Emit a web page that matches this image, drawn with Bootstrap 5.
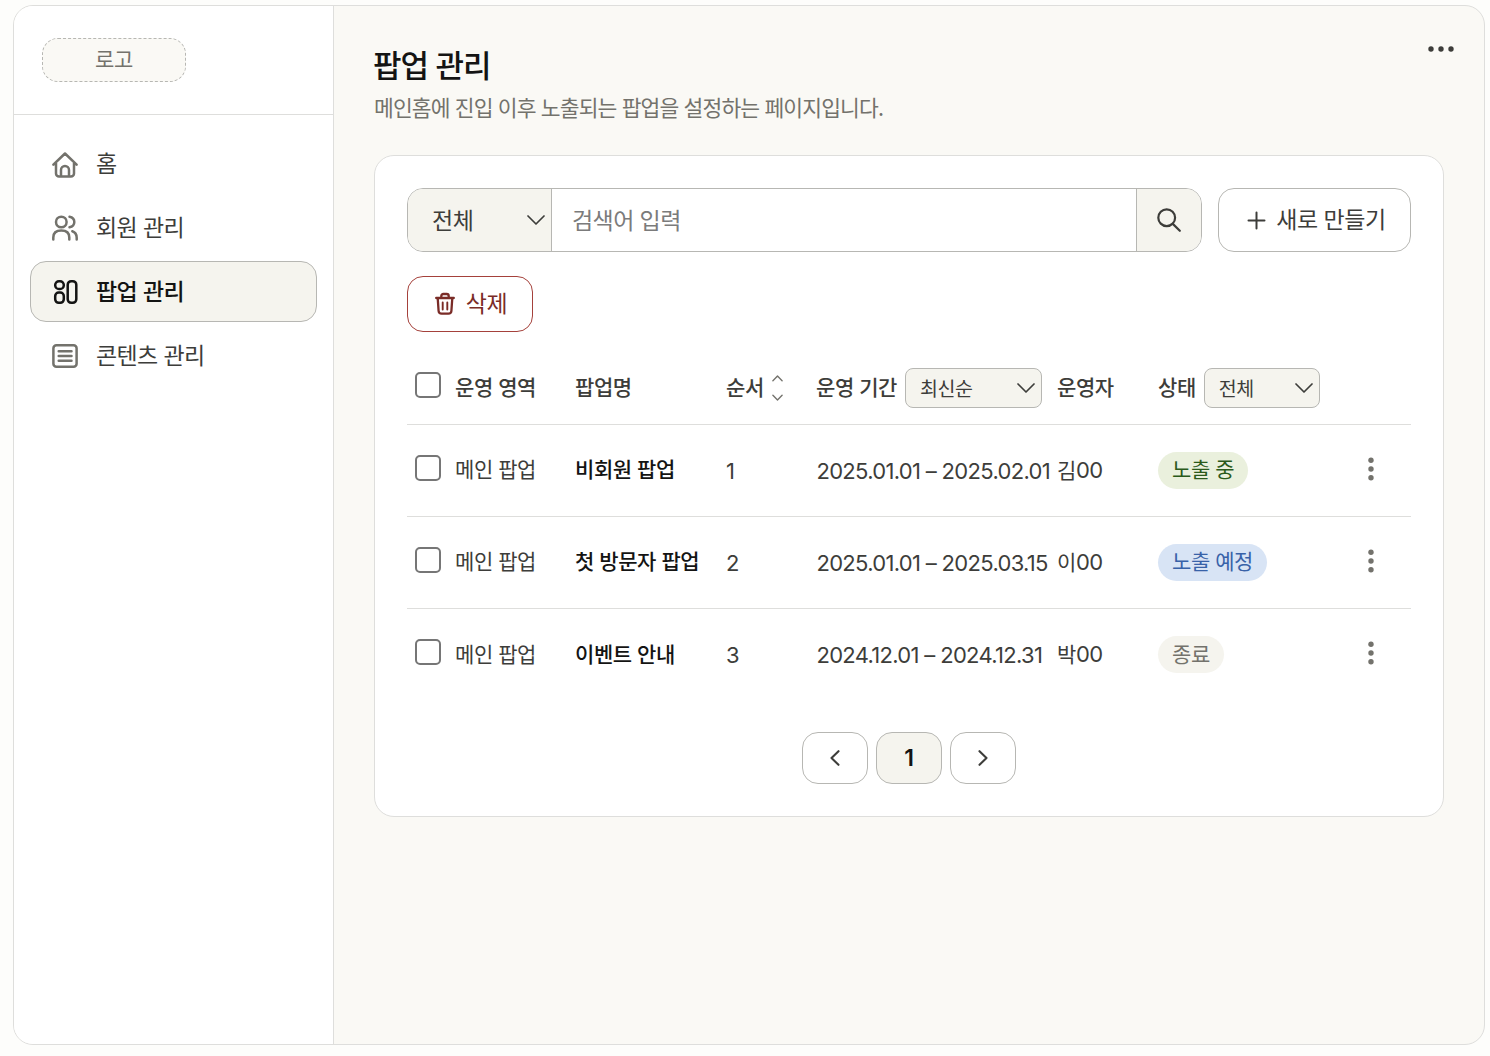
<!DOCTYPE html>
<html lang="ko">
<head>
<meta charset="utf-8">
<meta name="viewport" content="width=device-width, initial-scale=1">
<title>팝업 관리</title>
<link href="https://cdn.jsdelivr.net/npm/bootstrap@5.3.0/dist/css/bootstrap.min.css" rel="stylesheet">
<style>
  :root { --ink:#141413; --text:#3d3d3a; --muted:#73726c; --soft:#f5f4ee; --line:#dededc; --edge:#b7b7b3; }
  body { background:#fdfdfb; color:var(--text); font-family:"Noto Sans CJK KR","Noto Sans",sans-serif; font-size:21px; line-height:1.4; letter-spacing:-.021em; height:1056px; padding:5px 5px 11px 13px; overflow:hidden; }
  svg { fill:none; stroke:currentColor; stroke-linecap:round; stroke-linejoin:round; flex:none; display:block; }
  .dots { fill:currentColor; stroke:none; }
  .frame { border:1px solid var(--line); border-radius:20px; background:#faf9f5; }
  .side { width:320px; background:#fff; border-right:1px solid var(--line); }
  .brand-area { height:109px; padding:32px 28px; border-bottom:1px solid var(--line); }
  .logo-box { width:144px; height:44px; border:1px dashed var(--edge); border-radius:16px; background:#faf9f5; color:var(--muted); padding-bottom:2px; }
  .menu { padding:18px 16px; gap:3px; }
  .menu .nav-link { height:61px; border:1px solid transparent; border-radius:16px; padding:0 21px; gap:18px; font-size:23px; letter-spacing:-.027em; color:var(--text); }
  .menu .nav-link span { padding-bottom:3px; }
  .menu .nav-link svg { color:var(--muted); }
  .menu .home-icon { margin-top:2px; }
  .menu .nav-link.active { background:var(--soft); border-color:var(--edge); color:var(--ink); font-weight:500; }
  .menu .nav-link.active svg { color:var(--ink); }
  .main { padding:35px 40px 0 39px; }
  .title { font-size:31px; line-height:46px; font-weight:500; color:var(--ink); letter-spacing:-.035em; }
  .subtitle { font-size:21.5px; line-height:32px; color:var(--muted); letter-spacing:-.04em; padding:4px 0 0 1px; }
  .more-btn { color:var(--text); margin:1px -12px 0 0; }
  .panel { margin:32px 0 0 1px; border:1px solid var(--line); border-radius:20px; height:662px; padding:32px; }
  .tools { height:64px; font-size:23px; }
  .search-group { border:1px solid var(--edge); border-radius:16px; overflow:hidden; }
  .kind { width:144px; background:var(--soft); border-right:1px solid var(--edge); padding:0 6px 2px 24px; }
  .kind svg { margin-top:2px; }
  .query { border:0; padding:0 20px 2px; font-size:23px; letter-spacing:-.025em; border-radius:0; }
  .query::placeholder { color:#7b7b7b; }
  .go { width:65px; background:var(--soft); border-left:1px solid var(--edge); }
  .outline-btn { border:1px solid var(--edge); border-radius:16px; background:#fff; }
  .create { width:193px; gap:10px; padding-left:4px; }
  .create span, .remove span { padding-bottom:3px; }
  .remove { width:126px; height:56px; margin-top:24px; border-color:#a5413b; color:#7a2c27; font-size:23px; gap:11px; padding-left:2px; }
  .popups { table-layout:fixed; width:1004px; margin:20px 0 0; color:var(--text); }
  .popups th, .popups td { padding:0; border:0; height:91px; vertical-align:middle; white-space:nowrap; font-weight:400; }
  .popups th { height:71px; font-weight:500; }
  .popups th.lbl, .popups th span.lbl, .popups td.lbl { padding-bottom:2px; }
  .popups tr { border-bottom:1px solid var(--line); height:92px; }
  .popups thead tr { height:72px; }
  .popups td.num { padding-top:2px; }
  .popups td.dates { padding-left:.4px; letter-spacing:-.031em; }
  .popups tbody tr:last-child { border-bottom:0; }
  .popups .name { color:var(--ink); font-weight:500; }
  .num { font-family:Inter,"Noto Sans CJK KR",sans-serif; font-size:22px; letter-spacing:-.02em; }
  .check { appearance:none; display:block; width:26px; height:26px; border:2px solid #767676; border-radius:5px; background:#fff; margin:0 0 5px 8px; }
  .filter { height:40px; border:1px solid var(--edge); border-radius:8px; background:var(--soft); padding:0 6px 1px 14px; font-size:19.5px; font-weight:400; }
  .filter svg { margin-top:1px; }
  .state { display:inline-flex; align-items:center; height:37px; border-radius:19px; padding:0 14px 2px; }
  .on { background:#eaf0dd; color:#2a5a1b; }
  .soon { background:#d8e4f5; color:#3862a8; }
  .done { background:var(--soft); color:var(--muted); }
  .rowmenu { color:var(--muted); margin:0 auto 3px; }
  .pager { margin-top:32px; gap:8px; }
  .pager .page-link { width:66px; height:52px; border:1px solid var(--edge); border-radius:16px; color:var(--text); background:#fff; font:600 23px Inter,sans-serif; }
  .pager .page-link.active { background:var(--soft); color:var(--ink); }
</style>
<script src="https://cdn.jsdelivr.net/npm/bootstrap@5.3.0/dist/js/bootstrap.bundle.min.js"></script>
</head>
<body>
<div class="frame d-flex h-100 overflow-hidden">
  <aside class="side flex-shrink-0">
    <div class="brand-area"><div class="logo-box d-flex align-items-center justify-content-center">로고</div></div>
    <nav class="menu nav flex-column">
      <a class="nav-link d-flex align-items-center" href="#"><svg class="home-icon" width="26" height="26" viewBox="0 0 26 26" stroke-width="2.500"><path d="M1.400 12.700 13 1.500 24.600 12.700M4 11v10.500a3 3 0 0 0 3 3h12a3 3 0 0 0 3-3V11M9 24.500V18a4 4 0 0 1 8 0v6.500"/></svg><span>홈</span></a>
      <a class="nav-link d-flex align-items-center" href="#"><svg width="26" height="26" viewBox="0 0 26 26" stroke-width="2.500"><circle cx="9.300" cy="7" r="5.300"/><path d="M1.300 24.500v-2c0-4.500 3-7 8-7s8 2.500 8 7v2M17.500 1.700c3 .6 4.800 2.600 4.800 5.300s-1.800 4.700-4.800 5.300M20.300 16.200c3 1 4.400 3.500 4.400 6.500v1.800"/></svg><span>회원 관리</span></a>
      <a class="nav-link active d-flex align-items-center" href="#"><svg width="26" height="26" viewBox="0 0 26 26" stroke-width="2.500"><rect x="3.200" y="2.200" width="8.600" height="7.800" rx="3.800"/><rect x="3.200" y="13.500" width="8.600" height="10.300" rx="3.500"/><rect x="15.700" y="2.200" width="8.600" height="21.600" rx="3.500"/></svg><span>팝업 관리</span></a>
      <a class="nav-link d-flex align-items-center" href="#"><svg width="26" height="26" viewBox="0 0 26 26" stroke-width="2.500"><rect x="1.400" y="2.300" width="23.200" height="21.400" rx="3"/><path d="M6.700 8.200h12.800M6.700 13h12.800M6.700 17.800h12.800"/></svg><span>콘텐츠 관리</span></a>
    </nav>
  </aside>
  <main class="main flex-grow-1">
    <header class="d-flex justify-content-between align-items-start">
      <div><h1 class="title m-0">팝업 관리</h1><p class="subtitle mb-0">메인홈에 진입 이후 노출되는 팝업을 설정하는 페이지입니다.</p></div>
      <button class="more-btn btn border-0 p-0" aria-label="더보기"><svg class="dots" width="30" height="14" viewBox="0 0 30 14"><circle cx="5" cy="7" r="2.700"/><circle cx="15" cy="7" r="2.700"/><circle cx="25" cy="7" r="2.700"/></svg></button>
    </header>
    <section class="panel bg-white">
      <div class="tools d-flex gap-3">
        <div class="search-group d-flex flex-grow-1">
          <div class="kind d-flex align-items-center justify-content-between flex-shrink-0" role="button"><span>전체</span><svg width="18" height="10" viewBox="0 0 18 10" stroke-width="1.700"><path d="m1 1 8 8 8-8"/></svg></div>
          <input class="query form-control shadow-none flex-grow-1" placeholder="검색어 입력">
          <div class="go d-flex align-items-center justify-content-center flex-shrink-0" role="button"><svg width="24" height="24" viewBox="0 0 24 24" stroke-width="2.200"><circle cx="9.700" cy="9.700" r="8.400"/><path d="m15.800 15.900 7 6.900"/></svg></div>
        </div>
        <div class="create outline-btn d-flex align-items-center justify-content-center" role="button"><svg width="19" height="19" viewBox="0 0 19 19" stroke-width="2"><path d="M9.500 1.500v16M1.500 9.500h16"/></svg><span>새로 만들기</span></div>
      </div>
      <div class="remove outline-btn d-flex align-items-center justify-content-center" role="button"><svg width="20" height="24" viewBox="0 0 20 24" stroke-width="2.300"><path d="M1.200 6h17.600M6.300 6V4a2 2 0 0 1 2-2h3.400a2 2 0 0 1 2 2v2M2.700 6l.9 13a3 3 0 0 0 3 2.700h6.800a3 3 0 0 0 3-2.700l.9-13"/><path stroke-width="1.900" d="M7.700 10.500v7M12.300 10.500v7"/></svg><span>삭제</span></div>
      <table class="popups">
        <colgroup><col style="width:48px"><col style="width:120px"><col style="width:151px"><col style="width:90px"><col style="width:241px"><col style="width:101px"><col style="width:172px"><col></colgroup>
        <thead><tr>
          <th><input type="checkbox" class="check" aria-label="전체 선택"></th><th class="lbl">운영 영역</th><th class="lbl">팝업명</th>
          <th><div class="d-flex align-items-center"><span class="lbl me-2">순서</span><svg width="11" height="28" viewBox="0 0 12 28" stroke-width="1.500" color="#73726c"><path d="m1 6 5-5 5 5M1 22l5 5 5-5"/></svg></div></th>
          <th><div class="d-flex align-items-center gap-2"><span class="lbl">운영 기간</span><div class="filter d-flex align-items-center justify-content-between" style="width:137px"><span>최신순</span><svg width="18" height="10" viewBox="0 0 18 10" stroke-width="1.700"><path d="m1 1 8 8 8-8"/></svg></div></div></th>
          <th class="lbl">운영자</th>
          <th><div class="d-flex align-items-center gap-2"><span class="lbl">상태</span><div class="filter d-flex align-items-center justify-content-between" style="width:116px"><span>전체</span><svg width="18" height="10" viewBox="0 0 18 10" stroke-width="1.700"><path d="m1 1 8 8 8-8"/></svg></div></div></th><th></th>
        </tr></thead>
        <tbody>
          <tr><td><input type="checkbox" class="check" aria-label="선택"></td><td class="lbl">메인 팝업</td><td class="name lbl">비회원 팝업</td><td class="num">1</td><td class="num dates">2025.01.01 – 2025.02.01</td><td>김<span class="num">00</span></td><td><span class="state on">노출 중</span></td><td><svg class="rowmenu dots" width="8" height="24" viewBox="0 0 8 24"><circle cx="4" cy="3.300" r="2.700"/><circle cx="4" cy="12" r="2.700"/><circle cx="4" cy="20.700" r="2.700"/></svg></td></tr>
          <tr><td><input type="checkbox" class="check" aria-label="선택"></td><td class="lbl">메인 팝업</td><td class="name lbl">첫 방문자 팝업</td><td class="num">2</td><td class="num dates">2025.01.01 – 2025.03.15</td><td>이<span class="num">00</span></td><td><span class="state soon">노출 예정</span></td><td><svg class="rowmenu dots" width="8" height="24" viewBox="0 0 8 24"><circle cx="4" cy="3.300" r="2.700"/><circle cx="4" cy="12" r="2.700"/><circle cx="4" cy="20.700" r="2.700"/></svg></td></tr>
          <tr><td><input type="checkbox" class="check" aria-label="선택"></td><td class="lbl">메인 팝업</td><td class="name lbl">이벤트 안내</td><td class="num">3</td><td class="num dates">2024.12.01 – 2024.12.31</td><td>박<span class="num">00</span></td><td><span class="state done">종료</span></td><td><svg class="rowmenu dots" width="8" height="24" viewBox="0 0 8 24"><circle cx="4" cy="3.300" r="2.700"/><circle cx="4" cy="12" r="2.700"/><circle cx="4" cy="20.700" r="2.700"/></svg></td></tr>
        </tbody>
      </table>
      <nav class="pager d-flex justify-content-center">
        <a class="page-link d-flex align-items-center justify-content-center" href="#" aria-label="이전"><svg width="10" height="16" viewBox="0 0 10 16" stroke-width="2.100"><path d="M8.500 1.200 1.500 8l7 6.800"/></svg></a>
        <a class="page-link active d-flex align-items-center justify-content-center" href="#">1</a>
        <a class="page-link d-flex align-items-center justify-content-center" href="#" aria-label="다음"><svg width="10" height="16" viewBox="0 0 10 16" stroke-width="2.100"><path d="m1.500 1.200 7 6.800-7 6.800"/></svg></a>
      </nav>
    </section>
  </main>
</div>
</body>
</html>
